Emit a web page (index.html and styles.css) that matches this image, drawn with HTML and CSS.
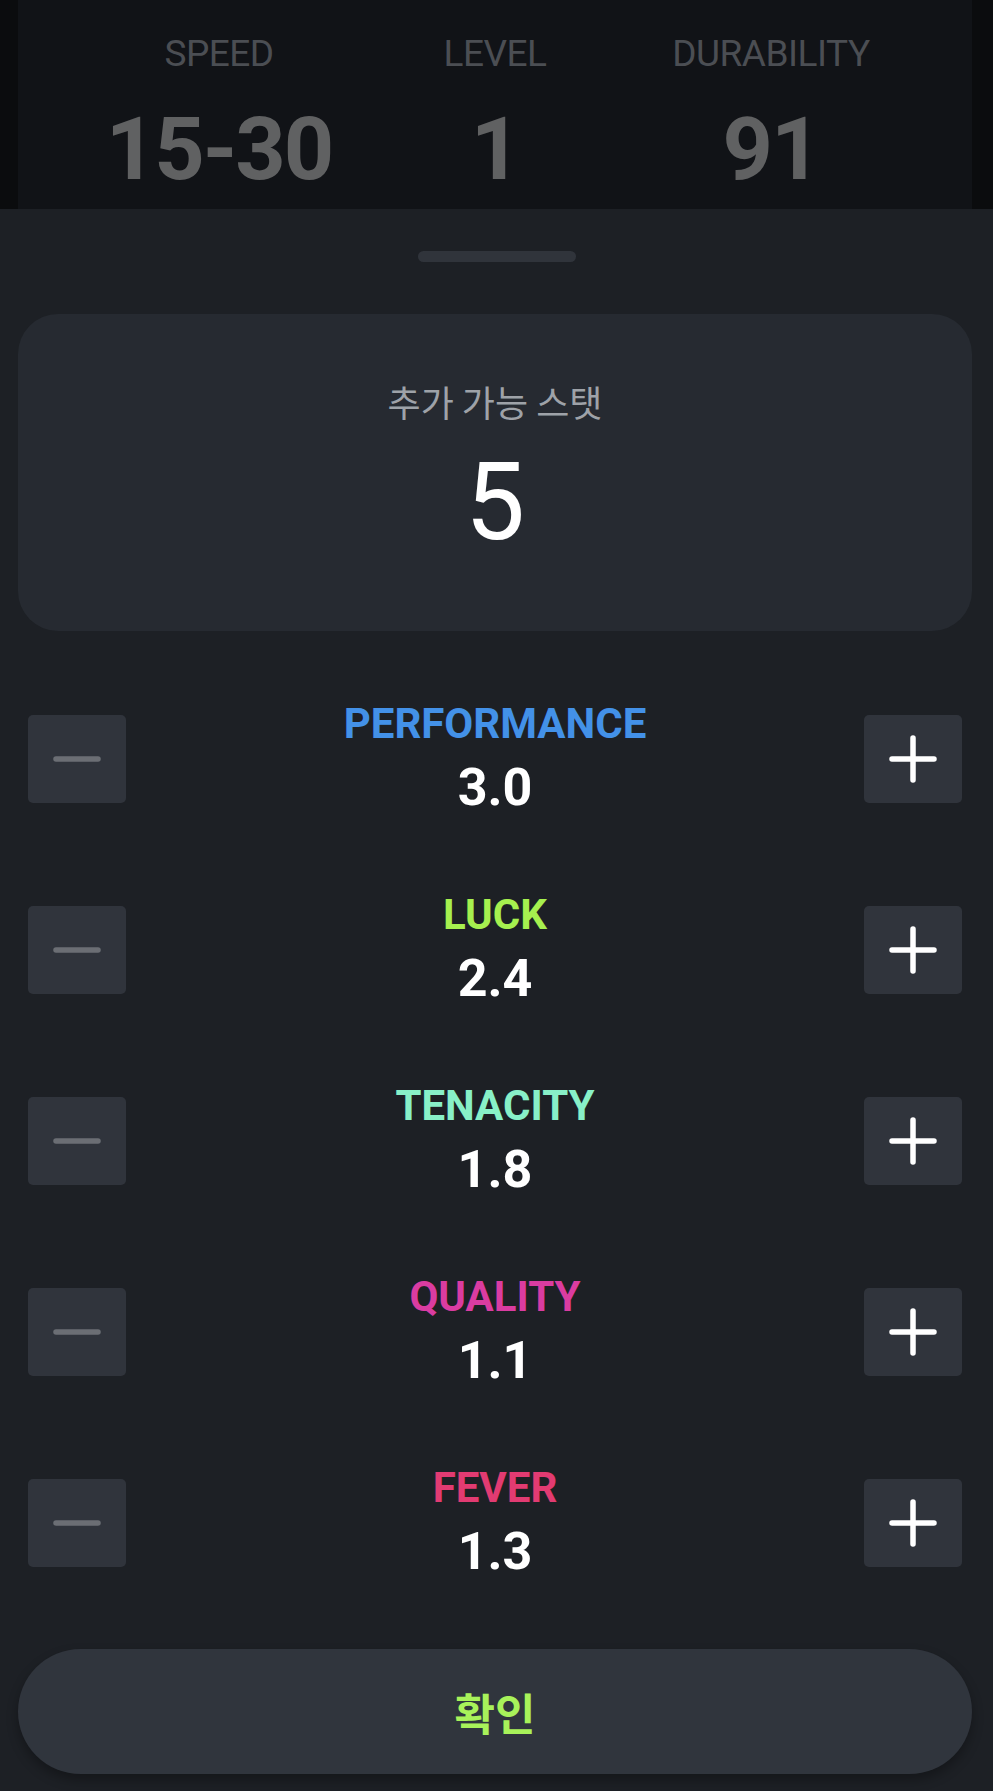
FILE: index.html
```
<!DOCTYPE html>
<html>
<head>
    <title>스탯 분배</title>
    <link rel="stylesheet" href="styles.css">
</head>
<body>
    <header class="backdrop">
        <div class="stats-panel">
            <div class="stat">
                <div class="stat-label">SPEED</div>
                <div class="stat-value">15-30</div>
            </div>
            <div class="stat">
                <div class="stat-label">LEVEL</div>
                <div class="stat-value">1</div>
            </div>
            <div class="stat">
                <div class="stat-label">DURABILITY</div>
                <div class="stat-value">91</div>
            </div>
        </div>
    </header>

    <main class="sheet">
        <div class="handle"></div>

        <div class="points-card">
            <div class="points-label">추가 가능 스탯</div>
            <div class="points-value">5</div>
        </div>

        <div class="attr-list">
            <div class="attr-row">
                <button class="step-btn minus"><svg viewBox="0 0 48 48"><path d="M3 24h42"/></svg></button>
                <div class="attr-info">
                    <div class="attr-name performance">PERFORMANCE</div>
                    <div class="attr-value">3.0</div>
                </div>
                <button class="step-btn plus"><svg viewBox="0 0 48 48"><path d="M3 24h42M24 3v42"/></svg></button>
            </div>
            <div class="attr-row">
                <button class="step-btn minus"><svg viewBox="0 0 48 48"><path d="M3 24h42"/></svg></button>
                <div class="attr-info">
                    <div class="attr-name luck">LUCK</div>
                    <div class="attr-value">2.4</div>
                </div>
                <button class="step-btn plus"><svg viewBox="0 0 48 48"><path d="M3 24h42M24 3v42"/></svg></button>
            </div>
            <div class="attr-row">
                <button class="step-btn minus"><svg viewBox="0 0 48 48"><path d="M3 24h42"/></svg></button>
                <div class="attr-info">
                    <div class="attr-name tenacity">TENACITY</div>
                    <div class="attr-value">1.8</div>
                </div>
                <button class="step-btn plus"><svg viewBox="0 0 48 48"><path d="M3 24h42M24 3v42"/></svg></button>
            </div>
            <div class="attr-row">
                <button class="step-btn minus"><svg viewBox="0 0 48 48"><path d="M3 24h42"/></svg></button>
                <div class="attr-info">
                    <div class="attr-name quality">QUALITY</div>
                    <div class="attr-value">1.1</div>
                </div>
                <button class="step-btn plus"><svg viewBox="0 0 48 48"><path d="M3 24h42M24 3v42"/></svg></button>
            </div>
            <div class="attr-row">
                <button class="step-btn minus"><svg viewBox="0 0 48 48"><path d="M3 24h42"/></svg></button>
                <div class="attr-info">
                    <div class="attr-name fever">FEVER</div>
                    <div class="attr-value">1.3</div>
                </div>
                <button class="step-btn plus"><svg viewBox="0 0 48 48"><path d="M3 24h42M24 3v42"/></svg></button>
            </div>
        </div>

        <button class="confirm-btn">확인</button>
    </main>
</body>
</html>
```

FILE: styles.css
```
* {
    margin: 0;
    padding: 0;
    box-sizing: border-box;
    font-family: 'Roboto', 'Noto Sans CJK KR', sans-serif;
}

body {
    width: 993px;
    min-height: 1791px;
    background: #1d2025;
}

/* dimmed screen behind the sheet */
.backdrop {
    height: 209px;
    background: #0b0c0e;
    padding: 0 21px 0 18px;
}

.stats-panel {
    height: 100%;
    background: #111317;
    display: grid;
    grid-template-columns: repeat(3, 276px);
    justify-content: center;
    padding-top: 35px;
}

.stat {
    text-align: center;
}

.stat-label {
    font-size: 37px;
    line-height: 37px;
    color: #4b4e53;
    letter-spacing: -0.5px;
}

.stat-value {
    margin-top: 33px;
    font-size: 88px;
    line-height: 88px;
    font-weight: 700;
    color: #606162;
    letter-spacing: -2px;
}

/* bottom sheet */
.sheet {
    padding: 42px 21px 17px 18px;
    display: flex;
    flex-direction: column;
}

.handle {
    align-self: center;
    width: 158px;
    height: 11px;
    border-radius: 6px;
    background: #30343b;
    margin-left: 3px;
}

.points-card {
    margin-top: 52px;
    height: 317px;
    background: #262a31;
    border-radius: 40px;
    text-align: center;
    padding-top: 65px;
}

.points-label {
    font-family: 'Noto Sans CJK KR', sans-serif;
    font-size: 36px;
    line-height: 44px;
    color: #9ea2a8;
}

.points-value {
    margin-top: 26px;
    font-size: 107px;
    line-height: 107px;
    color: #ffffff;
}

.attr-list {
    margin-top: 68px;
    padding: 0 10px 0 10px;
    display: flex;
    flex-direction: column;
    gap: 72px;
}

.attr-row {
    display: flex;
    align-items: center;
    justify-content: space-between;
}

.step-btn {
    width: 98px;
    height: 88px;
    border: none;
    border-radius: 5px;
    background: #30343c;
    display: flex;
    align-items: center;
    justify-content: center;
}

.step-btn svg {
    width: 48px;
    height: 48px;
    fill: none;
    stroke-linecap: round;
    stroke-width: 5.5;
}

.minus svg {
    stroke: #6b6e74;
}

.plus svg {
    stroke: #ffffff;
}

.attr-info {
    text-align: center;
    display: flex;
    flex-direction: column;
    gap: 9px;
}

.attr-name {
    font-size: 42px;
    line-height: 50px;
    font-weight: 700;
}

.attr-value {
    font-size: 52px;
    line-height: 60px;
    font-weight: 700;
    color: #ffffff;
}

.performance { color: #4391e8; }
.luck { color: #a6f04f; }
.tenacity { color: #88f0c8; }
.quality { color: #da3ca1; }
.fever { color: #e23b72; }

.confirm-btn {
    margin-top: 67px;
    height: 125px;
    border: none;
    border-radius: 63px;
    background: #30353d;
    box-shadow: 0 6px 12px rgba(0, 0, 0, 0.3);
    font-family: 'Noto Sans CJK KR', sans-serif;
    font-size: 44px;
    font-weight: 700;
    color: #a8f25a;
}
```
